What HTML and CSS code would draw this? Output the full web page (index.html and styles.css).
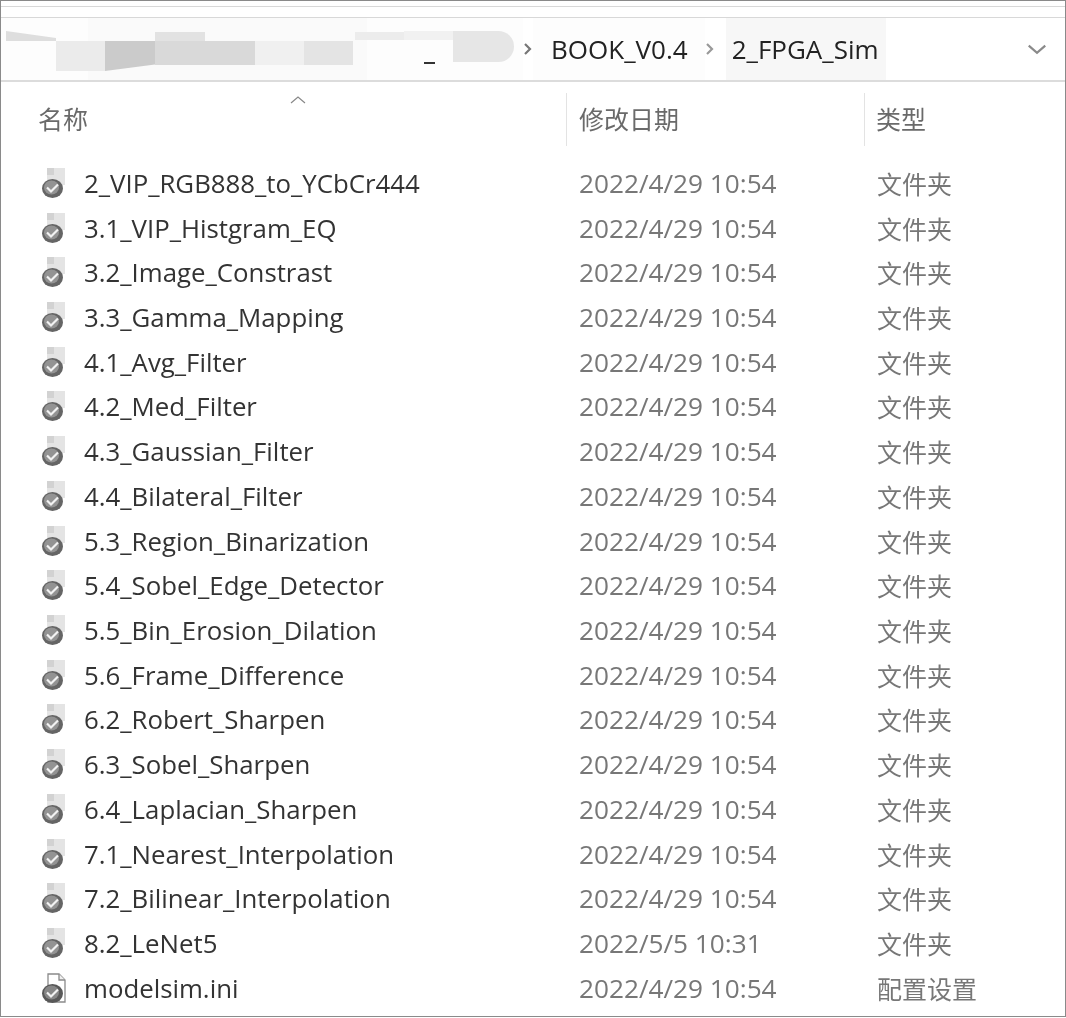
FILE: index.html
```html
<!DOCTYPE html>
<html>
<head>
    <title>2_FPGA_Sim</title>
    <link rel="stylesheet" href="styles.css">
</head>
<body>
    <svg class="defs" width="0" height="0">
        <symbol id="folder-icon" viewBox="0 -1 28 32">
            <path d="M7 0h18v17H7z" fill="#e4e4e4"/>
            <path d="M7 0h7v7H7z" fill="#d2d2d2"/>
            <ellipse cx="12.500" cy="20.500" rx="10.500" ry="9.500" fill="#656565"/>
            <ellipse cx="11.500" cy="19.500" rx="7.500" ry="7" fill="#939393"/>
            <path d="M7 19.500l4 4 7-7" fill="none" stroke="#f2f2f2" stroke-width="2.200"/>
        </symbol>
        <symbol id="file-icon" viewBox="0 -1 28 32">
            <path d="M8 1h11l6 6v22H8z" fill="#fff" stroke="#8a8a8a" stroke-width="1.300"/>
            <path d="M19 1v6h6" fill="#efefef" stroke="#8a8a8a" stroke-width="1.300"/>
            <ellipse cx="12.500" cy="20.500" rx="10.500" ry="9.500" fill="#585858"/>
            <ellipse cx="11.500" cy="19.500" rx="7.500" ry="7" fill="#878787"/>
            <path d="M7 19.500l4 4 7-7" fill="none" stroke="#f2f2f2" stroke-width="2.200"/>
        </symbol>
    </svg>

    <div class="window">
        <div class="title-strip"></div>
        <div class="address-bar">
            <div class="crumb-hidden">
                <span class="smudge smudge-panel"></span>
                <span class="smudge smudge-a"></span>
                <span class="smudge smudge-b"></span>
                <span class="smudge smudge-c"></span>
                <span class="smudge smudge-d"></span>
                <span class="smudge smudge-e"></span>
                <span class="smudge smudge-f"></span>
                <span class="smudge smudge-g"></span>
                <span class="smudge smudge-h"></span>
                <span class="smudge smudge-i"></span>
                <span class="smudge smudge-j"></span>
                <span class="smudge-dash"></span>
            </div>
            <svg class="chevron" viewBox="0 0 10 14"><path d="M2 2l5 5-5 5" fill="none" stroke="#777" stroke-width="2.200"/></svg>
            <span class="crumb crumb-book">BOOK_V0.4</span>
            <svg class="chevron" viewBox="0 0 10 14"><path d="M2 2l5 5-5 5" fill="none" stroke="#999" stroke-width="2.200"/></svg>
            <span class="crumb crumb-current">2_FPGA_Sim</span>
            <svg class="dropdown" viewBox="0 0 18 10"><path d="M1.500 1.500L9 8l7.500-6.500" fill="none" stroke="#8a8a8a" stroke-width="2"/></svg>
        </div>

        <div class="list-header">
            <div class="col-head col-name">名称
                <svg class="sort-arrow" viewBox="0 0 16 8"><path d="M1 7l7-6 7 6" fill="none" stroke="#888" stroke-width="1.200"/></svg>
            </div>
            <div class="col-head col-date">修改日期</div>
            <div class="col-head col-type">类型</div>
        </div>

        <div class="file-list">
            <div class="file-row"><svg class="icon"><use href="#folder-icon"/></svg><span class="name">2_VIP_RGB888_to_YCbCr444</span><span class="date">2022/4/29 10:54</span><span class="type">文件夹</span></div>
            <div class="file-row"><svg class="icon"><use href="#folder-icon"/></svg><span class="name">3.1_VIP_Histgram_EQ</span><span class="date">2022/4/29 10:54</span><span class="type">文件夹</span></div>
            <div class="file-row"><svg class="icon"><use href="#folder-icon"/></svg><span class="name">3.2_Image_Constrast</span><span class="date">2022/4/29 10:54</span><span class="type">文件夹</span></div>
            <div class="file-row"><svg class="icon"><use href="#folder-icon"/></svg><span class="name">3.3_Gamma_Mapping</span><span class="date">2022/4/29 10:54</span><span class="type">文件夹</span></div>
            <div class="file-row"><svg class="icon"><use href="#folder-icon"/></svg><span class="name">4.1_Avg_Filter</span><span class="date">2022/4/29 10:54</span><span class="type">文件夹</span></div>
            <div class="file-row"><svg class="icon"><use href="#folder-icon"/></svg><span class="name">4.2_Med_Filter</span><span class="date">2022/4/29 10:54</span><span class="type">文件夹</span></div>
            <div class="file-row"><svg class="icon"><use href="#folder-icon"/></svg><span class="name">4.3_Gaussian_Filter</span><span class="date">2022/4/29 10:54</span><span class="type">文件夹</span></div>
            <div class="file-row"><svg class="icon"><use href="#folder-icon"/></svg><span class="name">4.4_Bilateral_Filter</span><span class="date">2022/4/29 10:54</span><span class="type">文件夹</span></div>
            <div class="file-row"><svg class="icon"><use href="#folder-icon"/></svg><span class="name">5.3_Region_Binarization</span><span class="date">2022/4/29 10:54</span><span class="type">文件夹</span></div>
            <div class="file-row"><svg class="icon"><use href="#folder-icon"/></svg><span class="name">5.4_Sobel_Edge_Detector</span><span class="date">2022/4/29 10:54</span><span class="type">文件夹</span></div>
            <div class="file-row"><svg class="icon"><use href="#folder-icon"/></svg><span class="name">5.5_Bin_Erosion_Dilation</span><span class="date">2022/4/29 10:54</span><span class="type">文件夹</span></div>
            <div class="file-row"><svg class="icon"><use href="#folder-icon"/></svg><span class="name">5.6_Frame_Difference</span><span class="date">2022/4/29 10:54</span><span class="type">文件夹</span></div>
            <div class="file-row"><svg class="icon"><use href="#folder-icon"/></svg><span class="name">6.2_Robert_Sharpen</span><span class="date">2022/4/29 10:54</span><span class="type">文件夹</span></div>
            <div class="file-row"><svg class="icon"><use href="#folder-icon"/></svg><span class="name">6.3_Sobel_Sharpen</span><span class="date">2022/4/29 10:54</span><span class="type">文件夹</span></div>
            <div class="file-row"><svg class="icon"><use href="#folder-icon"/></svg><span class="name">6.4_Laplacian_Sharpen</span><span class="date">2022/4/29 10:54</span><span class="type">文件夹</span></div>
            <div class="file-row"><svg class="icon"><use href="#folder-icon"/></svg><span class="name">7.1_Nearest_Interpolation</span><span class="date">2022/4/29 10:54</span><span class="type">文件夹</span></div>
            <div class="file-row"><svg class="icon"><use href="#folder-icon"/></svg><span class="name">7.2_Bilinear_Interpolation</span><span class="date">2022/4/29 10:54</span><span class="type">文件夹</span></div>
            <div class="file-row"><svg class="icon"><use href="#folder-icon"/></svg><span class="name">8.2_LeNet5</span><span class="date">2022/5/5 10:31</span><span class="type">文件夹</span></div>
            <div class="file-row"><svg class="icon"><use href="#file-icon"/></svg><span class="name">modelsim.ini</span><span class="date">2022/4/29 10:54</span><span class="type">配置设置</span></div>
        </div>
    </div>
</body>
</html>
```

FILE: styles.css
```css
html, body {
    margin: 0;
    padding: 0;
}
body {
    background-color: #fff;
    font-family: "Open Sans", "Noto Sans CJK SC", sans-serif;
    color: #333;
}
.defs {
    position: absolute;
}
.window {
    box-sizing: border-box;
    width: 1066px;
    height: 1017px;
    border: 1px solid #8a8a8a;
    background-color: #fff;
    overflow: hidden;
    filter: blur(0.4px);
}
.title-strip {
    box-sizing: border-box;
    height: 12px;
    margin-top: 5px;
    border-top: 1px solid #d8d8d8;
    border-bottom: 1px solid #d8d8d8;
}
.address-bar {
    display: flex;
    align-items: center;
    height: 62px;
    border-bottom: 2px solid #dcdcdc;
}
.crumb-hidden {
    position: relative;
    width: 522px;
    height: 62px;
    flex-shrink: 0;
    background-color: #fdfdfd;
}
.smudge {
    position: absolute;
    display: block;
}
.smudge-panel { left: 87px; top: 0; width: 279px; height: 62px; background-color: #fafafa; }
.smudge-a { left: 5px; top: 13px; width: 50px; height: 10px; background-color: #dedede; clip-path: polygon(0 0, 100% 70%, 100% 100%, 0 100%); }
.smudge-b { left: 55px; top: 23px; width: 49px; height: 30px; background-color: #ebebeb; }
.smudge-c { left: 104px; top: 23px; width: 50px; height: 30px; background-color: #cbcbcb; clip-path: polygon(0 0, 100% 0, 100% 78%, 0 100%); }
.smudge-d { left: 154px; top: 14px; width: 50px; height: 9px; background-color: #e2e2e2; }
.smudge-e { left: 154px; top: 23px; width: 100px; height: 24px; background-color: #d9d9d9; }
.smudge-f { left: 254px; top: 23px; width: 49px; height: 24px; background-color: #f0f0f0; }
.smudge-g { left: 303px; top: 23px; width: 49px; height: 24px; background-color: #e4e4e4; }
.smudge-h { left: 354px; top: 14px; width: 49px; height: 8px; background-color: #ececec; }
.smudge-i { left: 403px; top: 13px; width: 49px; height: 9px; background-color: #f1f1f1; }
.smudge-j { left: 452px; top: 13px; width: 61px; height: 31px; background-color: #e6e6e6; border-radius: 0 20px 20px 0; }
.smudge-dash {
    position: absolute;
    left: 423px;
    top: 44px;
    width: 11px;
    height: 2px;
    background-color: #333;
}
.chevron {
    width: 10px;
    height: 14px;
    flex-shrink: 0;
}
.crumb {
    font-size: 26px;
    color: #222;
    line-height: 62px;
    white-space: nowrap;
}
.crumb-book {
    padding: 0 17px 0 18px;
    background-color: #fdfdfd;
}
.crumb-current {
    margin-left: 11px;
    padding: 0 7px 0 6px;
    background-color: #f7f7f7;
}
.dropdown {
    width: 20px;
    height: 11px;
    margin-left: auto;
    margin-right: 18px;
}
.list-header {
    position: relative;
    display: flex;
    height: 66px;
    align-items: center;
}
.col-head {
    box-sizing: border-box;
    position: relative;
    height: 53px;
    line-height: 53px;
    font-size: 25px;
    color: #6a6a6a;
    flex-shrink: 0;
    top: 4px;
}
.col-name {
    width: 565px;
    padding-left: 37px;
}
.col-date {
    width: 298px;
    padding-left: 12px;
    border-left: 1px solid #e3e3e3;
}
.col-type {
    padding-left: 11px;
    border-left: 1px solid #e3e3e3;
}
.sort-arrow {
    position: absolute;
    left: 289px;
    top: 3px;
    width: 16px;
    height: 8px;
}
.file-list {
    display: grid;
    grid-auto-rows: 44.72px;
    margin-top: 12.500px;
}
.file-row {
    display: grid;
    grid-template-columns: 83px 495px 298px 1fr;
    align-items: center;
    white-space: nowrap;
}
.icon {
    width: 28px;
    height: 32px;
    margin-left: 39px;
}
.name {
    font-size: 25.800px;
    color: #333;
}
.date {
    font-size: 26.200px;
    color: #777;
}
.type {
    font-size: 25px;
    color: #777;
}
```
